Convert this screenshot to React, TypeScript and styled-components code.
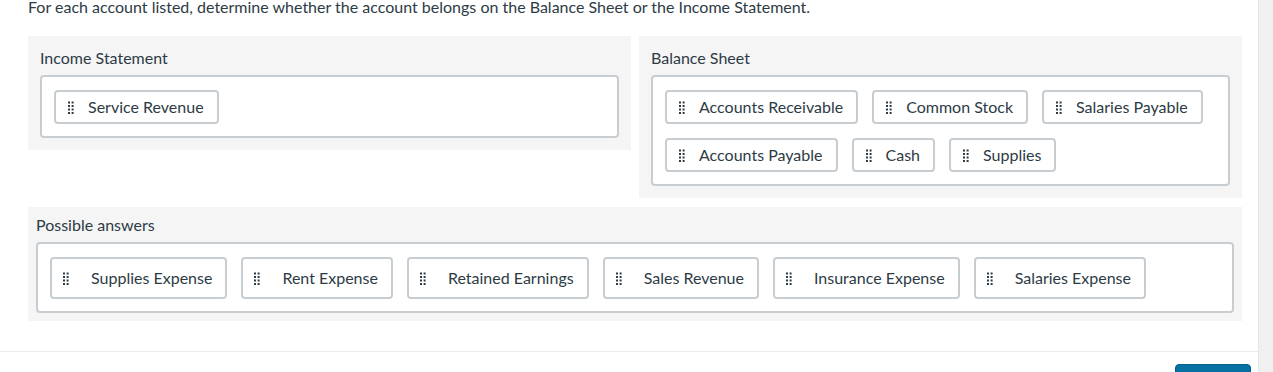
import React from "react";
import styled, {createGlobalStyle} from "styled-components";

const GlobalStyle = createGlobalStyle`
  html, body {
    margin: 0;
    padding: 0;
    background: #fff;
    overflow: hidden;
  }
  body {
    font-family: Lato, "Liberation Sans", sans-serif;
    color: #2d3b45;
  }
`

const Page = styled.div`
  display: flex;
  height: 372px;
  overflow: hidden;
`

const Main = styled.div`
  flex: 1;
  display: flex;
  flex-direction: column;
`

const Scrollbar = styled.div`
  width: 14px;
  background: #f0f0f0;
  border-left: 1px solid #e6e6e6;
`

const Content = styled.div`
  padding: 0 16px 0 28px;
`

const Prompt = styled.p`
  margin: 0 0 22px;
  font-size: 16px;
  line-height: 14px;
`

const TopRow = styled.div`
  display: grid;
  grid-template-columns: 1fr 1fr;
  gap: 8px;
  align-items: start;
  margin-bottom: 9px;
`

const Panel = styled.div<{$pad: number}>`
  background: #f5f5f5;
  padding: ${p => p.$pad}px;
`

const Label = styled.div`
  font-size: 16px;
  line-height: 20px;
  margin-bottom: 7px;
`

const DropBox = styled.div`
  background: #fff;
  border: 2px solid #c7cdd1;
  border-radius: 4px;
  padding: 13px 12px 12px;
  display: flex;
  flex-wrap: wrap;
  gap: 14px;
`

const Chip = styled.div<{$tall?: boolean}>`
  display: flex;
  align-items: center;
  gap: ${p => p.$tall ? 22 : 14}px;
  background: #fff;
  border: 2px solid #c7cdd1;
  border-radius: 4px;
  padding: ${p => p.$tall ? '10px 13px 10px 11px' : '6px 13px 6px 12px'};
  font-size: 16px;
  line-height: 18px;
  white-space: nowrap;
`

const Footer = styled.div`
  margin-top: 30px;
  border-top: 1px solid #e8eaec;
  padding: 12px 7px 0 0;
  display: flex;
  justify-content: flex-end;
`

const SubmitButton = styled.button`
  width: 76px;
  height: 36px;
  background: #0770a3;
  border: 1px solid #065d88;
  border-radius: 4px;
`

// drag grip, 2 columns x 4 rows of dots
const Handle = () => (
    <svg width="6" height="13" viewBox="0 0 6 13">
        {[0.5, 4, 7.5, 11].map(y => (
            <React.Fragment key={y}>
                <rect x="0" y={y} width="2" height="2" fill="#2d3b45"/>
                <rect x="3.6" y={y} width="2" height="2" fill="#2d3b45"/>
            </React.Fragment>
        ))}
    </svg>
)

const Item = ({text, tall}: {text: string, tall?: boolean}) => (
    <Chip $tall={tall}>
        <Handle/>
        <span>{text}</span>
    </Chip>
)

const income = ['Service Revenue']
const balance = ['Accounts Receivable', 'Common Stock', 'Salaries Payable', 'Accounts Payable', 'Cash', 'Supplies']
const answers = ['Supplies Expense', 'Rent Expense', 'Retained Earnings', 'Sales Revenue', 'Insurance Expense', 'Salaries Expense']

const App = () => {
    return (
        <Page>
            <GlobalStyle/>
            <Main>
                <Content>
                    <Prompt>For each account listed, determine whether the account belongs on the Balance Sheet or the Income Statement.</Prompt>
                    <TopRow>
                        <Panel $pad={12}>
                            <Label>Income Statement</Label>
                            <DropBox>
                                {income.map(t => <Item key={t} text={t}/>)}
                            </DropBox>
                        </Panel>
                        <Panel $pad={12}>
                            <Label>Balance Sheet</Label>
                            <DropBox>
                                {balance.map(t => <Item key={t} text={t}/>)}
                            </DropBox>
                        </Panel>
                    </TopRow>
                    <Panel $pad={8}>
                        <Label>Possible answers</Label>
                        <DropBox>
                            {answers.map(t => <Item key={t} text={t} tall/>)}
                        </DropBox>
                    </Panel>
                </Content>
                <Footer>
                    <SubmitButton/>
                </Footer>
            </Main>
            <Scrollbar/>
        </Page>
    )
}

export default App
